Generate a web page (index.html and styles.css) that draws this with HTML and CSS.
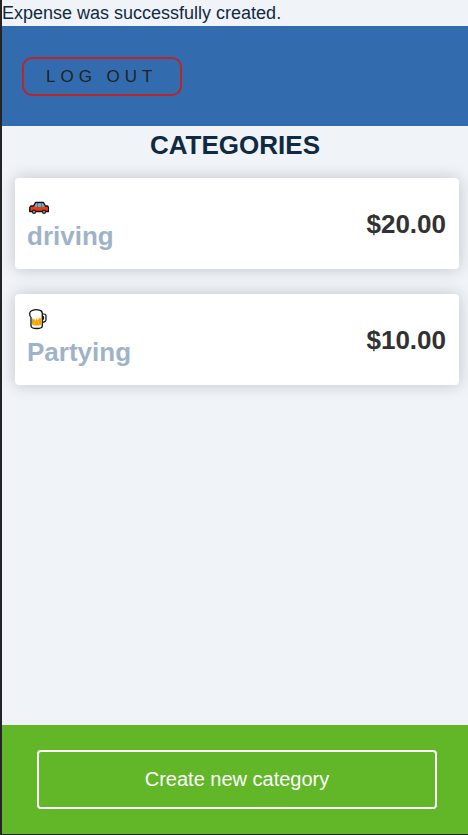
FILE: index.html
```html
<!DOCTYPE html>
<html lang="en">
<head>
<meta charset="utf-8">
<meta name="viewport" content="width=device-width, initial-scale=1">
<title>Categories</title>
<link rel="stylesheet" href="styles.css">
</head>
<body>
<p class="notice">Expense was successfully created.</p>
<header class="topbar">
  <button class="logout" type="button">LOG OUT</button>
</header>
<main class="content">
  <h1 class="title">CATEGORIES</h1>
  <ul class="cards">
    <li>
      <a class="card" href="#driving">
        <span class="category">
          <svg class="icon" viewBox="0 0 22 22" aria-hidden="true">
            <path d="M2.700 15.500l1-1.500h2.800l2-3.500h8l2 3.500h2.200l.8 1.500v4H2.700z" fill="#f03a17" stroke="#111" stroke-width="1.300" stroke-linejoin="round"/>
            <path d="M7.500 14.800l1.700-3.500h6.800l1.700 3.500z" fill="#35c8f2"/>
            <path d="M10.500 11v7M14.500 11v7" stroke="#c43c22" stroke-width=".8"/>
            <path d="M4 18.500h16" stroke="#bd2814" stroke-width="1"/>
            <circle cx="7" cy="19.700" r="1.600" fill="#999" stroke="#222" stroke-width="1.200"/>
            <circle cx="17" cy="19.700" r="1.600" fill="#999" stroke="#222" stroke-width="1.200"/>
          </svg>
          <span class="name">driving</span>
        </span>
        <span class="amount">$20.00</span>
      </a>
    </li>
    <li>
      <a class="card" href="#partying">
        <span class="category">
          <svg class="icon" viewBox="0 0 22 22" aria-hidden="true">
            <path d="M15 6h2q2 0 2 2v3.500q0 2.500-4 3V12q1.500-.3 1.500-1.500V9q0-.7-1.500-.7z" fill="#f4f4f4" stroke="#111" stroke-width="1.200" stroke-linejoin="round"/>
            <path d="M4 9.500Q2.500 8.500 2.700 5q.3-2 2.800-2.700Q9 1 12.500 2.200q2.800.6 2.800 3.300V18q0 2.500-5.600 2.500T4 18z" fill="#fff" stroke="#111" stroke-width="1.300" stroke-linejoin="round"/>
            <path d="M5 9.500l1 2 1.200-1 1 3 1.300-3.500 1.200 3L12 9.500l1.300 1.500 1.400-3V16q-1 1.500-5 1.500T5 16z" fill="#f6a500"/>
            <path d="M7.500 14v2.500M11.500 13v3" stroke="#ffc02b" stroke-width="1"/>
          </svg>
          <span class="name">Partying</span>
        </span>
        <span class="amount">$10.00</span>
      </a>
    </li>
  </ul>
</main>
<footer class="actions">
  <a class="create" href="#new">Create new category</a>
</footer>
</body>
</html>
```
FILE: styles.css
```css
* {
  box-sizing: border-box;
}

body {
  display: flex;
  flex-direction: column;
  min-height: 100vh;
  margin: 0;
  border-left: 2px solid #242427;
  border-bottom: 1px solid #242427;
  background: #f0f4f8;
  color: #102a43;
  font-family: "Liberation Sans", Arial, sans-serif;
}

.notice {
  margin: 0;
  font-size: 18px;
  line-height: 26px;
}

.topbar {
  display: flex;
  align-items: center;
  height: 100px;
  padding: 0 20px;
  background: #326cae;
}

.logout {
  padding: 8px 22px;
  border: 2px solid #ba2525;
  border-radius: 10px;
  background: transparent;
  color: #222;
  font-family: inherit;
  font-size: 17px;
  line-height: 19px;
  letter-spacing: 5px;
}

.content {
  flex: 1;
}

.title {
  margin: 0;
  font-size: 26px;
  line-height: 38px;
  text-align: center;
}

.cards {
  display: grid;
  gap: 25px;
  margin: 0;
  padding: 14px 9px 14px 13px;
  list-style: none;
}

.card {
  display: flex;
  align-items: center;
  justify-content: space-between;
  padding: 14px 13px 14px 12px;
  border-radius: 4px;
  background: #fff;
  box-shadow: 0 0 16px rgba(0, 0, 0, 0.2);
  color: #323232;
  font-size: 26px;
  font-weight: bold;
  line-height: 38px;
  text-decoration: none;
}

.category {
  display: grid;
  gap: 3px;
}

.icon {
  width: 22px;
  height: 22px;
}

.name {
  color: #9fb3c8;
}

.actions {
  padding: 25px 31px 25px 35px;
  background: #61b727;
}

.create {
  display: block;
  padding: 14px;
  border: 2px solid #fff;
  border-radius: 4px;
  color: #fff;
  font-size: 20px;
  line-height: 27px;
  text-align: center;
  text-decoration: none;
}
```
